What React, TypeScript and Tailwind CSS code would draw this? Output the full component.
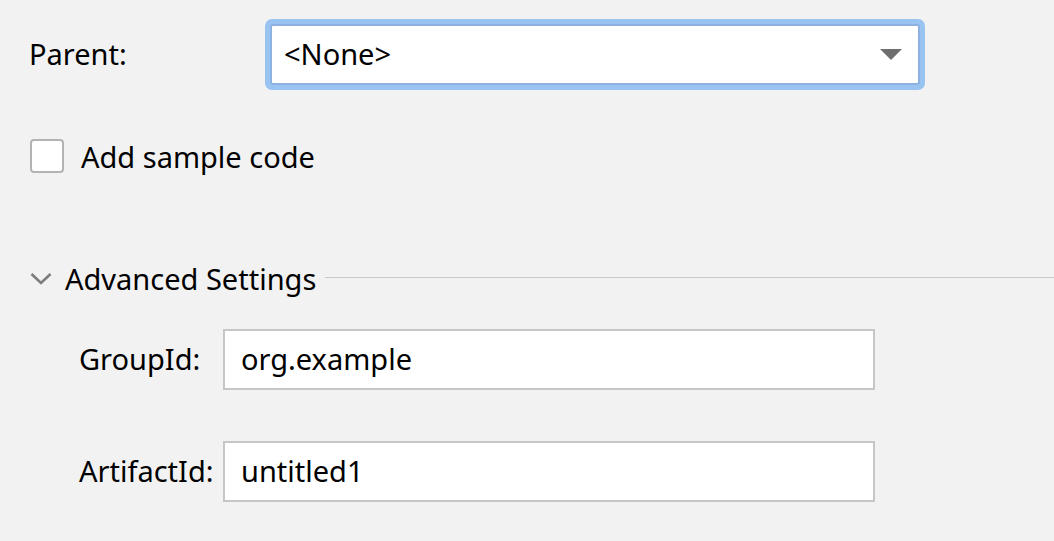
import React from "react";

export default function App() {
  const font = { fontFamily: '"Noto Sans", "Open Sans", sans-serif' };
  return (
    <div
      className="w-[1054px] h-[541px] bg-[#f2f2f2] overflow-hidden text-[29px] text-black flex flex-col pt-[19px] pl-[29px]"
      style={font}
    >
      {/* Parent row */}
      <div className="flex items-center h-[71px]">
        <div className="w-[236px] leading-none -mt-[2px]">Parent:</div>
        <div className="w-[660px] h-[71px] rounded-[7px] bg-[#99c3f1] p-[5px]">
          <div className="w-full h-full rounded-[3px] border-2 border-[#8db2e2] bg-white flex items-center pl-[12px] pr-[16px]">
            <span className="flex-1 leading-none -mt-[2px]">&lt;None&gt;</span>
            <svg width="22" height="11" viewBox="0 0 22 11">
              <polygon points="0,0 22,0 11,11" fill="#6e6e6e" />
            </svg>
          </div>
        </div>
      </div>

      {/* Checkbox row */}
      <div className="flex items-center h-[34px] mt-[49px] ml-[1px]">
        <div className="w-[34px] h-[34px] rounded-[4px] border-2 border-[#b3b3b3] bg-white" />
        <span className="ml-[17px] leading-none">Add sample code</span>
      </div>

      {/* Advanced settings header */}
      <div className="flex items-center h-[40px] mt-[86px]">
        <svg width="24" height="14" viewBox="0 0 24 14" className="ml-[1px] -mt-[1px]">
          <polyline
            points="1.5,2 11,11 20.5,2"
            fill="none"
            stroke="#7d7d7d"
            strokeWidth="2.6"
          />
        </svg>
        <span className="ml-[11px] leading-none -mt-[2px]">Advanced Settings</span>
        <div className="flex-1 h-px bg-[#c9c9c9] ml-[9px] -mt-[3px]" />
      </div>

      {/* GroupId */}
      <div className="flex items-center h-[61px] mt-[30px] pl-[50px]">
        <div className="w-[144px] leading-none -mt-[2px]">GroupId:</div>
        <div className="w-[652px] h-[61px] border-2 border-[#c6c6c6] bg-white flex items-center pl-[16px]">
          <span className="leading-none -mt-[2px]">org.example</span>
        </div>
      </div>

      {/* ArtifactId */}
      <div className="flex items-center h-[61px] mt-[51px] pl-[50px]">
        <div className="w-[144px] leading-none -mt-[2px]">ArtifactId:</div>
        <div className="w-[652px] h-[61px] border-2 border-[#c6c6c6] bg-white flex items-center pl-[16px]">
          <span className="leading-none -mt-[2px]">untitled1</span>
        </div>
      </div>
    </div>
  );
}
